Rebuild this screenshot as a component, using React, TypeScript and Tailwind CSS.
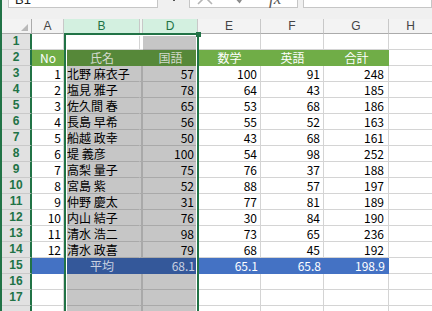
import React from "react";

// 成績一覧（B列・D列を選択中の状態）
const students = [
  { no: 1, name: "北野 麻衣子", jp: 57, math: 100, en: 91, total: 248 },
  { no: 2, name: "塩見 雅子", jp: 78, math: 64, en: 43, total: 185 },
  { no: 3, name: "佐久間 春", jp: 65, math: 53, en: 68, total: 186 },
  { no: 4, name: "長島 早希", jp: 56, math: 55, en: 52, total: 163 },
  { no: 5, name: "船越 政幸", jp: 50, math: 43, en: 68, total: 161 },
  { no: 6, name: "堤 義彦", jp: 100, math: 54, en: 98, total: 252 },
  { no: 7, name: "高梨 量子", jp: 75, math: 76, en: 37, total: 188 },
  { no: 8, name: "宮島 紫", jp: 52, math: 88, en: 57, total: 197 },
  { no: 9, name: "仲野 慶太", jp: 31, math: 77, en: 81, total: 189 },
  { no: 10, name: "内山 結子", jp: 76, math: 30, en: 84, total: 190 },
  { no: 11, name: "清水 浩二", jp: 98, math: 73, en: 65, total: 236 },
  { no: 12, name: "清水 政喜", jp: 79, math: 68, en: 45, total: 192 },
];

const RowHead = ({ n }: { n?: number }) => (
  <div className="w-[30px] shrink-0 border-r-2 border-b border-r-[#217346] border-b-[#c9c9c9] bg-[#e1e1e1] text-center font-['Liberation_Sans',sans-serif] text-[12px] font-bold leading-[15px] text-[#217346]">
    {n}
  </div>
);

const FormulaBar = () => (
  <div className="h-[19px] overflow-hidden bg-[#f0f0f0]">
    <div className="flex h-[8px] items-end">
      <div className="ml-[6px] flex h-[24px] w-[150px] shrink-0 items-end border border-[#c6c6c6] bg-white pb-[1px] pl-[6px] font-['Liberation_Sans',sans-serif] text-[13px] leading-[13px] text-[#222]">
        B1
      </div>
      <div className="flex h-[24px] w-[31px] shrink-0 items-end justify-center pb-[7px]">
        <div className="h-[2px] w-[2px] bg-[#555]" />
      </div>
      <div className="flex h-[24px] w-[109px] shrink-0 items-end border border-[#c6c6c6] bg-white">
        <svg className="mb-[1px] ml-[6px] h-[18px] w-[18px] shrink-0" viewBox="0 0 18 18">
          <path d="M2 2 L16 16 M16 2 L2 16" stroke="#b5b5b5" strokeWidth="1.6" fill="none" />
        </svg>
        <svg className="mb-[2px] ml-[19px] h-[16px] w-[16px] shrink-0" viewBox="0 0 16 16">
          <path d="M2 8 L6.5 13 L14 2" stroke="#8a8a8a" strokeWidth="1.8" fill="none" />
        </svg>
        <span className="mb-[1px] ml-[20px] font-['Liberation_Serif',serif] text-[17px] italic leading-[14px] text-[#555]">
          fx
        </span>
      </div>
      <div className="w-[5px] shrink-0" />
      <div className="h-[24px] flex-1 border border-[#c6c6c6] bg-white" />
    </div>
  </div>
);

const ColumnHeaders = () => (
  <div className="flex h-[15px] font-['Liberation_Sans',sans-serif] text-[12px] leading-[14px]">
    <div className="flex w-[30px] shrink-0 items-end justify-end border-r border-b border-[#ababab] bg-[#f3f3f3] pr-[3px] pb-[2px]">
      <svg className="h-[7px] w-[7px]" viewBox="0 0 7 7">
        <path d="M7 0 L7 7 L0 7 Z" fill="#b9b9b9" />
      </svg>
    </div>
    <div className="w-[32px] shrink-0 border-r border-b border-r-[#c8c8c8] border-b-[#ababab] bg-[#f3f3f3] text-center text-[#444]">A</div>
    <div className="w-[76px] shrink-0 border-r border-b border-r-[#c8c8c8] border-b-[#217346] bg-[#d3f0e0] text-center text-[#217346]">B</div>
    <div className="w-[3px] shrink-0 border-r border-b border-r-[#c8c8c8] border-b-[#217346] bg-[#eef7f1]" />
    <div className="w-[55px] shrink-0 border-r border-b border-r-[#c8c8c8] border-b-[#217346] bg-[#d3f0e0] text-center text-[#217346]">D</div>
    <div className="w-[63px] shrink-0 border-r border-b border-r-[#c8c8c8] border-b-[#ababab] bg-[#f3f3f3] text-center text-[#444]">E</div>
    <div className="w-[63px] shrink-0 border-r border-b border-r-[#c8c8c8] border-b-[#ababab] bg-[#f3f3f3] text-center text-[#444]">F</div>
    <div className="w-[65px] shrink-0 border-r border-b border-r-[#c8c8c8] border-b-[#ababab] bg-[#f3f3f3] text-center text-[#444]">G</div>
    <div className="flex-1 border-b border-[#ababab] bg-[#f3f3f3] text-center text-[#444]">H</div>
  </div>
);

// 空行（B・C・D列は選択色）
const BlankRow = ({ n, activeB }: { n?: number; activeB?: boolean }) => (
  <div className="flex h-[16px]">
    <RowHead n={n} />
    <div className="w-[32px] shrink-0 border-r border-b border-[#d4d4d4]" />
    {activeB ? (
      <div className="w-[76px] shrink-0 border-r border-b border-[#d4d4d4] bg-white" />
    ) : (
      <div className="w-[76px] shrink-0 border-r border-b border-r-[#c6c6c6] border-b-[#a9a9a9] bg-[#c6c6c6]" />
    )}
    {activeB ? (
      <div className="w-[3px] shrink-0 border-b border-[#d4d4d4] bg-white" />
    ) : (
      <div className="w-[3px] shrink-0 border-r-2 border-b border-[#a9a9a9] bg-[#c6c6c6]" />
    )}
    <div className="w-[55px] shrink-0 border-r border-b border-[#a9a9a9] bg-[#c6c6c6]" />
    <div className="w-[63px] shrink-0 border-r border-b border-[#d4d4d4]" />
    <div className="w-[63px] shrink-0 border-r border-b border-[#d4d4d4]" />
    <div className="w-[65px] shrink-0 border-r border-b border-[#d4d4d4]" />
    <div className="flex-1 border-b border-[#d4d4d4]" />
  </div>
);

const TitleRow = () => (
  <div className="flex h-[16px] text-[12px] leading-[15px] text-white">
    <RowHead n={2} />
    <div className="w-[32px] shrink-0 border-b border-[#70ad47] bg-[#70ad47] text-center">No</div>
    <div className="w-[76px] shrink-0 border-b border-[#568839] bg-[#568839] text-center text-[#d3dacd]">氏名</div>
    <div className="w-[3px] shrink-0 border-b border-[#568839] bg-[#568839]" />
    <div className="w-[55px] shrink-0 border-b border-[#568839] bg-[#568839] text-center text-[#d3dacd]">国語</div>
    <div className="w-[63px] shrink-0 border-b border-[#70ad47] bg-[#70ad47] text-center">数学</div>
    <div className="w-[63px] shrink-0 border-b border-[#70ad47] bg-[#70ad47] text-center">英語</div>
    <div className="w-[65px] shrink-0 border-b border-[#70ad47] bg-[#70ad47] text-center">合計</div>
    <div className="flex-1 border-b border-[#d4d4d4]" />
  </div>
);

const AverageRow = () => (
  <div className="flex h-[16px] text-[12px] leading-[15px] text-white">
    <RowHead n={15} />
    <div className="w-[32px] shrink-0 border-b border-[#4472c4] bg-[#4472c4]" />
    <div className="w-[76px] shrink-0 border-b border-[#34589a] bg-[#34589a] text-center text-[#c9d1e1]">平均</div>
    <div className="w-[3px] shrink-0 border-b border-[#34589a] bg-[#34589a]" />
    <div className="w-[55px] shrink-0 border-b border-[#34589a] bg-[#34589a] pr-[3px] text-right text-[#c9d1e1]">68.1</div>
    <div className="w-[63px] shrink-0 border-b border-[#4472c4] bg-[#4472c4] pr-[3px] text-right">65.1</div>
    <div className="w-[63px] shrink-0 border-b border-[#4472c4] bg-[#4472c4] pr-[3px] text-right">65.8</div>
    <div className="w-[65px] shrink-0 border-b border-[#4472c4] bg-[#4472c4] pr-[4px] text-right">198.9</div>
    <div className="flex-1 border-b border-[#d4d4d4]" />
  </div>
);

const App = () => {
  return (
    <div className="relative h-[311px] w-[432px] overflow-hidden border-l-2 border-[#217346] bg-white font-['Noto_Sans_CJK_JP',sans-serif] text-black">
      <FormulaBar />
      <ColumnHeaders />
      <BlankRow n={1} activeB />
      <TitleRow />
      {students.map((s) => (
        <div key={s.no} className="flex h-[16px] text-[12px] leading-[15px]">
          <RowHead n={s.no + 2} />
          <div className="w-[32px] shrink-0 border-r border-b border-[#d4d4d4] pr-[2px] text-right">{s.no}</div>
          <div className="w-[76px] shrink-0 whitespace-nowrap border-r border-b border-r-[#c6c6c6] border-b-[#a9a9a9] bg-[#c6c6c6] pl-[3px]">
            {s.name}
          </div>
          <div className="w-[3px] shrink-0 border-r-2 border-b border-[#a9a9a9] bg-[#c6c6c6]" />
          <div className="w-[55px] shrink-0 border-r border-b border-[#a9a9a9] bg-[#c6c6c6] pr-[3px] text-right">{s.jp}</div>
          <div className="w-[63px] shrink-0 border-r border-b border-[#d4d4d4] pr-[3px] text-right">{s.math}</div>
          <div className="w-[63px] shrink-0 border-r border-b border-[#d4d4d4] pr-[3px] text-right">{s.en}</div>
          <div className="w-[65px] shrink-0 border-r border-b border-[#d4d4d4] pr-[4px] text-right">{s.total}</div>
          <div className="flex-1 border-b border-[#d4d4d4]" />
        </div>
      ))}
      <AverageRow />
      <BlankRow n={16} />
      <BlankRow n={17} />
      <BlankRow />

      {/* selection frame over B:D */}
      <div className="pointer-events-none absolute left-[62px] top-[33px] h-[300px] w-[135px] border-2 border-[#217346] shadow-[inset_0_0_0_1px_#ffffff]" />
      <div className="pointer-events-none absolute left-[194px] top-[32px] h-[5px] w-[5px] bg-[#217346]" />
    </div>
  );
};

export default App;
